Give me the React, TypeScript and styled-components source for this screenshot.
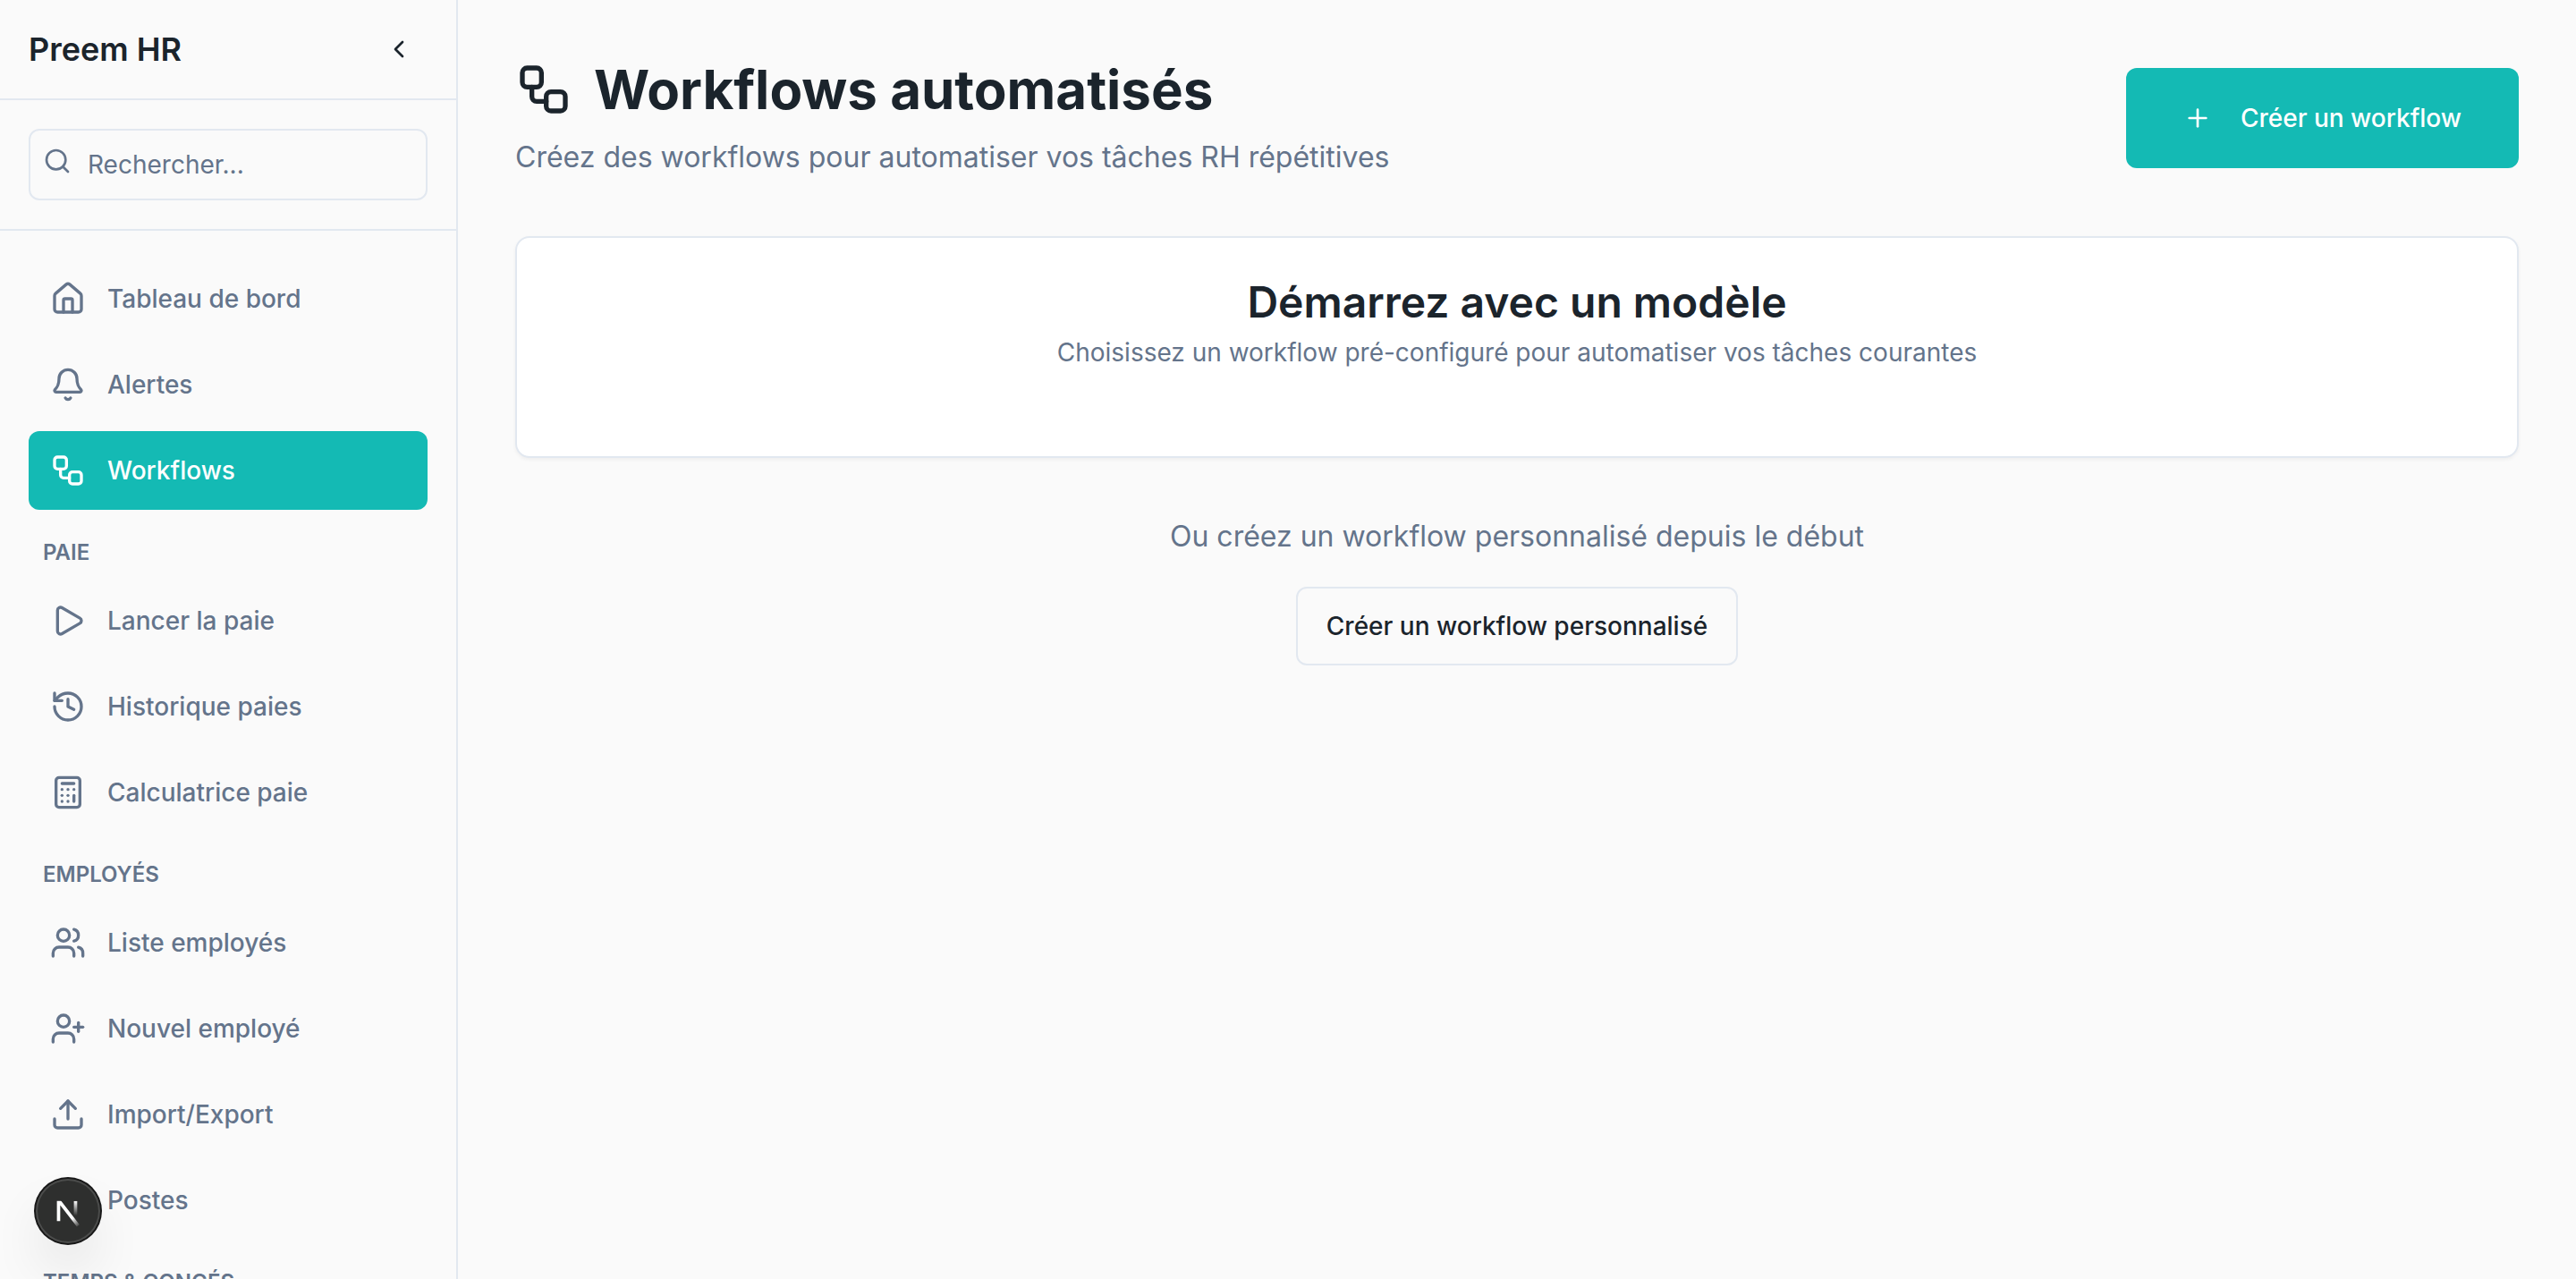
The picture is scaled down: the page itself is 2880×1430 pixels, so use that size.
import React from 'react';
import styled, { createGlobalStyle, css } from 'styled-components';
import {
  Bell,
  Briefcase,
  Calculator,
  ChevronLeft,
  History,
  House,
  Play,
  Plus,
  Search,
  Upload,
  UserPlus,
  Users,
  Workflow,
  type LucideIcon,
} from 'lucide-react';

const color = {
  background: '#fafafa',
  card: '#ffffff',
  foreground: '#1b242c',
  muted: '#64748b',
  border: '#e2e8f0',
  primary: '#14bab4',
  onPrimary: '#ffffff',
};

const GlobalStyle = createGlobalStyle`
  *, *::before, *::after { box-sizing: border-box; }
  body {
    margin: 0;
    background: ${color.background};
    color: ${color.foreground};
    font-family: Inter, "Noto Sans", sans-serif;
    font-size: 28px;
    line-height: 40px;
    -webkit-font-smoothing: antialiased;
  }
  h1, h2, p, ul { margin: 0; padding: 0; }
  ul { list-style: none; }
  button, input { font: inherit; color: inherit; }
  svg { flex-shrink: 0; }
`;

const Shell = styled.div`
  display: flex;
  height: 100vh;
  overflow: hidden;
`;

const Sidebar = styled.aside`
  display: flex;
  flex-direction: column;
  flex: 0 0 512px;
  border-right: 2px solid ${color.border};
`;

const SidebarHeader = styled.div`
  display: flex;
  align-items: center;
  justify-content: space-between;
  height: 112px;
  padding: 0 32px;
  border-bottom: 2px solid ${color.border};
`;

const Brand = styled.h2`
  font-size: 36px;
  font-weight: 600;
  line-height: 56px;
`;

const IconButton = styled.button`
  display: flex;
  align-items: center;
  justify-content: center;
  width: 64px;
  height: 64px;
  padding: 0;
  border: 0;
  border-radius: 12px;
  background: transparent;
  cursor: pointer;
`;

const SearchArea = styled.div`
  padding: 32px;
  border-bottom: 2px solid ${color.border};
`;

const SearchField = styled.label`
  position: relative;
  display: block;
  color: ${color.muted};

  svg {
    position: absolute;
    top: 20px;
    left: 16px;
  }
`;

const SearchInput = styled.input`
  display: block;
  width: 100%;
  height: 80px;
  padding: 0 24px 0 64px;
  border: 2px solid ${color.border};
  border-radius: 12px;
  background: ${color.background};
  color: ${color.foreground};

  &::placeholder {
    color: ${color.muted};
    opacity: 1;
  }
`;

const Nav = styled.nav`
  flex: 1;
  min-height: 0;
  padding: 32px;
  overflow-y: auto;
  scrollbar-width: none;
`;

const NavHeading = styled.h2`
  padding: 32px 16px 16px;
  color: ${color.muted};
  font-size: 24px;
  font-weight: 600;
  line-height: 32px;
  text-transform: uppercase;
`;

const NavList = styled.ul`
  display: flex;
  flex-direction: column;
  gap: 8px;
`;

const NavLink = styled.a<{ $active?: boolean }>`
  display: flex;
  align-items: center;
  gap: 24px;
  height: 88px;
  padding: 0 24px;
  border-radius: 12px;
  color: ${color.muted};
  font-weight: 500;
  text-decoration: none;

  ${({ $active }) =>
    $active &&
    css`
      background: ${color.primary};
      color: ${color.onPrimary};
    `}
`;

const Main = styled.main`
  flex: 1;
  min-width: 0;
  padding: 64px;
  overflow-y: auto;
`;

const PageHeader = styled.header`
  display: flex;
  align-items: center;
  justify-content: space-between;
  margin-bottom: 64px;
`;

const PageTitle = styled.h1`
  display: flex;
  align-items: center;
  gap: 24px;
  font-size: 60px;
  font-weight: 700;
  line-height: 72px;
`;

const Lead = styled.p`
  color: ${color.muted};
  font-size: 32px;
  line-height: 48px;
`;

const PageLead = styled(Lead)`
  margin-top: 16px;
`;

const Button = styled.button<{ $outline?: boolean }>`
  display: inline-flex;
  align-items: center;
  justify-content: center;
  gap: 32px;
  height: 112px;
  padding: 0 64px;
  border: 0;
  border-radius: 12px;
  background: ${color.primary};
  color: ${color.onPrimary};
  font-weight: 500;
  white-space: nowrap;
  cursor: pointer;

  ${({ $outline }) =>
    $outline &&
    css`
      height: 88px;
      padding: 0 32px;
      border: 2px solid ${color.border};
      background: ${color.background};
      color: ${color.foreground};
    `}
`;

const Card = styled.section`
  padding: 48px 48px 96px;
  border: 2px solid ${color.border};
  border-radius: 16px;
  background: ${color.card};
  box-shadow: 0 2px 4px rgba(0, 0, 0, 0.05);
  text-align: center;
`;

const CardTitle = styled.h2`
  font-size: 48px;
  font-weight: 600;
  line-height: 48px;
`;

const CardText = styled.p`
  margin-top: 12px;
  color: ${color.muted};
`;

const CustomStart = styled.section`
  display: flex;
  flex-direction: column;
  align-items: center;
  gap: 32px;
  padding-top: 64px;
`;

const DevBadge = styled.button`
  position: fixed;
  left: 40px;
  bottom: 40px;
  width: 72px;
  height: 72px;
  padding: 0;
  border: 0;
  border-radius: 50%;
  background: #2e2f2e;
  box-shadow:
    0 0 0 2px #171717,
    inset 0 0 0 2px rgba(255, 255, 255, 0.14),
    0 32px 64px -16px rgba(0, 0, 0, 0.24);
  cursor: pointer;

  svg { display: block; }
`;

type NavEntry = { label: string; icon: LucideIcon; active?: boolean };
type NavGroup = { title?: string; items: NavEntry[] };

const groups: NavGroup[] = [
  {
    items: [
      { label: 'Tableau de bord', icon: House },
      { label: 'Alertes', icon: Bell },
      { label: 'Workflows', icon: Workflow, active: true },
    ],
  },
  {
    title: 'Paie',
    items: [
      { label: 'Lancer la paie', icon: Play },
      { label: 'Historique paies', icon: History },
      { label: 'Calculatrice paie', icon: Calculator },
    ],
  },
  {
    title: 'Employés',
    items: [
      { label: 'Liste employés', icon: Users },
      { label: 'Nouvel employé', icon: UserPlus },
      { label: 'Import/Export', icon: Upload },
      { label: 'Postes', icon: Briefcase },
    ],
  },
  { title: 'Temps & Congés', items: [] },
];

function NextMark() {
  return (
    <svg width="72" height="72" viewBox="0 0 36 36" fill="none" aria-hidden="true">
      <defs>
        <linearGradient id="diagonal" x1="9.96" y1="11.12" x2="13.8" y2="15.9" gradientUnits="userSpaceOnUse">
          <stop stopColor="#fff" />
          <stop offset="1" stopColor="#fff" stopOpacity="0" />
        </linearGradient>
        <linearGradient id="stem" x1="11.8" y1="1.4" x2="11.8" y2="9.6" gradientUnits="userSpaceOnUse">
          <stop stopColor="#fff" />
          <stop offset="1" stopColor="#fff" stopOpacity="0" />
        </linearGradient>
        <clipPath id="mark">
          <rect x="0" y="1.4" width="16" height="16" />
        </clipPath>
      </defs>
      <g transform="translate(10.4 11)" clipPath="url(#mark)" strokeWidth="1.86">
        <path d="M13.3 15.2 2.34 1v11.6" stroke="url(#diagonal)" />
        <rect x="10.9" y="1.4" width="1.86" height="9" fill="url(#stem)" />
      </g>
    </svg>
  );
}

export default function App() {
  return (
    <>
      <GlobalStyle />
      <Shell>
        <Sidebar>
          <SidebarHeader>
            <Brand>Preem HR</Brand>
            <IconButton type="button" aria-label="Réduire le menu">
              <ChevronLeft size={32} />
            </IconButton>
          </SidebarHeader>
          <SearchArea>
            <SearchField>
              <Search size={32} />
              <SearchInput type="search" placeholder="Rechercher..." aria-label="Rechercher" />
            </SearchField>
          </SearchArea>
          <Nav>
            {groups.map(({ title, items }) => (
              <React.Fragment key={title ?? 'principal'}>
                {title && <NavHeading>{title}</NavHeading>}
                <NavList>
                  {items.map(({ label, icon: Icon, active }) => (
                    <li key={label}>
                      <NavLink href="#" $active={active} aria-current={active ? 'page' : undefined}>
                        <Icon size={40} />
                        {label}
                      </NavLink>
                    </li>
                  ))}
                </NavList>
              </React.Fragment>
            ))}
          </Nav>
        </Sidebar>
        <Main>
          <PageHeader>
            <div>
              <PageTitle>
                <Workflow size={64} />
                Workflows automatisés
              </PageTitle>
              <PageLead>Créez des workflows pour automatiser vos tâches RH répétitives</PageLead>
            </div>
            <Button type="button">
              <Plus size={32} />
              Créer un workflow
            </Button>
          </PageHeader>
          <Card>
            <CardTitle>Démarrez avec un modèle</CardTitle>
            <CardText>Choisissez un workflow pré-configuré pour automatiser vos tâches courantes</CardText>
          </Card>
          <CustomStart>
            <Lead>Ou créez un workflow personnalisé depuis le début</Lead>
            <Button type="button" $outline>
              Créer un workflow personnalisé
            </Button>
          </CustomStart>
        </Main>
      </Shell>
      <DevBadge type="button" aria-label="Outils de développement">
        <NextMark />
      </DevBadge>
    </>
  );
}
